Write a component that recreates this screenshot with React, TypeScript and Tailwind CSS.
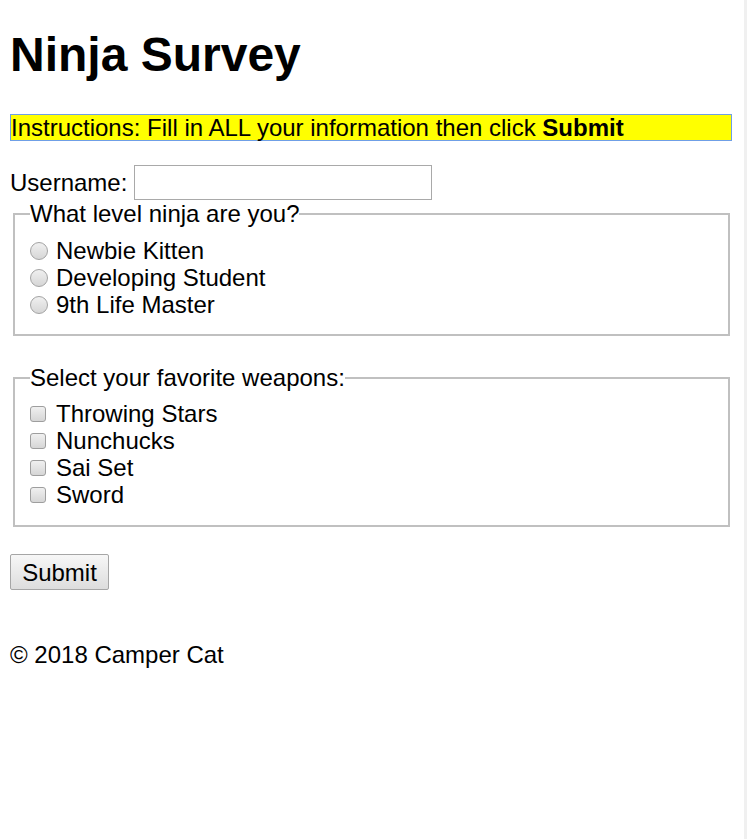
const levels = ["Newbie Kitten", "Developing Student", "9th Life Master"];
const weapons = ["Throwing Stars", "Nunchucks", "Sai Set", "Sword"];

function Radio() {
  return (
    <span className="block h-[18px] w-[18px] shrink-0 rounded-full border border-[#a3a3a3] bg-gradient-to-b from-[#f0f0f0] to-[#d6d6d6]" />
  );
}

function Checkbox() {
  return (
    <span className="block h-[16px] w-[16px] shrink-0 rounded-[3px] border border-[#9e9e9e] bg-gradient-to-b from-[#f0f0f0] to-[#d6d6d6]" />
  );
}

function Option({ label, kind }: { label: string; kind: "radio" | "checkbox" }) {
  return (
    <label className="flex items-center leading-[27px]">
      <span className="flex w-[26px] shrink-0 items-center">
        {kind === "radio" ? <Radio /> : <Checkbox />}
      </span>
      <span>{label}</span>
    </label>
  );
}

export default function App() {
  return (
    <div className="flex min-h-[839px] w-full bg-white font-['Liberation_Sans',Arial,sans-serif] text-[24px] text-black">
      <main className="flex-1 px-[10px]">
        <h1 className="mt-[27px] text-[48px] font-bold leading-[55px]">Ninja Survey</h1>

        <p className="mt-[32px] w-[722px] border border-[#6f9fe6] bg-[#ffff00] leading-[25px]">
          Instructions: Fill in ALL your information then click <b>Submit</b>
        </p>

        <form className="mt-[24px]">
          <div className="flex items-center gap-[7px]">
            <label htmlFor="username" className="leading-[27px]">Username:</label>
            <input
              id="username"
              type="text"
              className="h-[35px] w-[298px] border border-[#a9a9a9] bg-white px-[2px] outline-none"
            />
          </div>

          <fieldset className="ml-[3px] mr-[4px] border-2 border-solid border-[#c0c0c0] px-[15px] pb-[16px] pt-[10px]">
            <legend className="leading-[27px]">What level ninja are you?</legend>
            {levels.map((l) => (
              <Option key={l} label={l} kind="radio" />
            ))}
          </fieldset>

          <fieldset className="ml-[3px] mr-[4px] mt-[28px] border-2 border-solid border-[#c0c0c0] px-[15px] pb-[17px] pt-[9px]">
            <legend className="leading-[27px]">Select your favorite weapons:</legend>
            {weapons.map((w) => (
              <Option key={w} label={w} kind="checkbox" />
            ))}
          </fieldset>

          <button
            type="button"
            className="mt-[27px] h-[36px] w-[99px] rounded-[2px] border border-[#a6a6a6] bg-gradient-to-b from-[#f7f7f7] to-[#dddddd] leading-[27px]"
          >
            Submit
          </button>
        </form>

        <footer className="mt-[50px] leading-[27px]">© 2018 Camper Cat</footer>
      </main>
      <div className="w-[3px] shrink-0 bg-[#f0f0f0]" />
    </div>
  );
}
